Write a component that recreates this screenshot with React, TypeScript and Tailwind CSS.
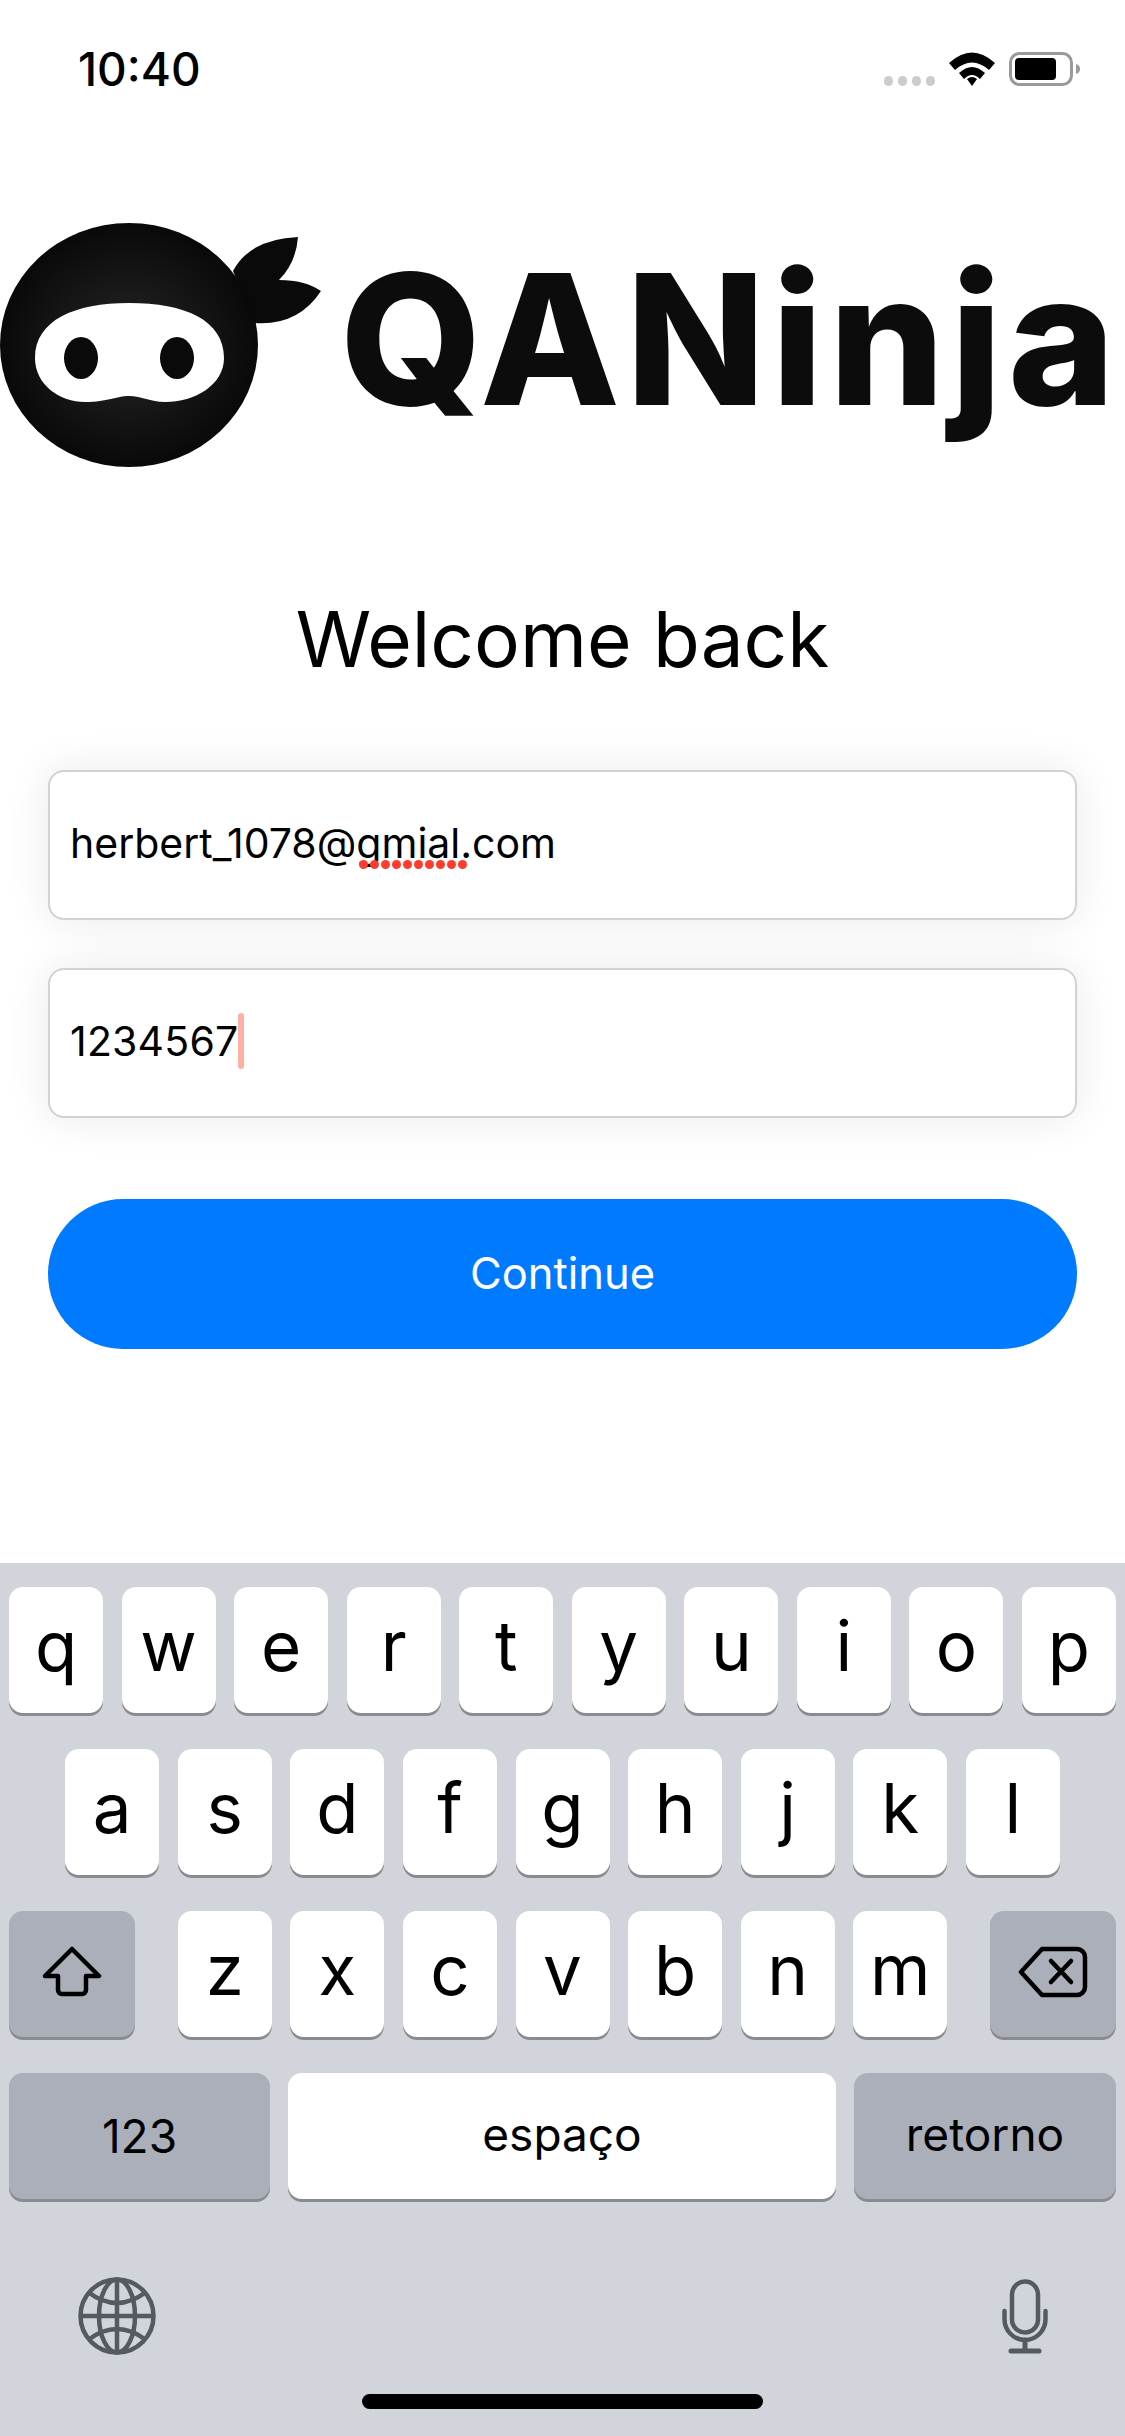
import React from "react";

const Key = ({ k }: { k: string }) => (
  <div className="w-[94px] h-[126px] bg-white rounded-[14px] shadow-[0_3px_0_#898b90] flex items-center justify-center text-[69px] leading-none text-black pb-[8px]">
    {k}
  </div>
);

const Head = () => (
  <svg width="322" height="246" viewBox="0 0 322 246" className="shrink-0">
    <defs>
      <radialGradient id="h" cx="50%" cy="50%" r="55%">
        <stop offset="0%" stopColor="#262626" />
        <stop offset="100%" stopColor="#060606" />
      </radialGradient>
    </defs>
    <path d="M233 48Q250 16 298 14Q296 40 279 57Q305 57 321 68Q298 103 255 100Z" fill="#0a0a0a" />
    <ellipse cx="129" cy="122" rx="129" ry="122" fill="url(#h)" />
    <path d="M35 135C35 97 75 80 129 80C185 80 224 97 224 135C224 162 195 179 165 179C150 179 142 173 129 173C116 173 108 179 85 179C60 179 35 162 35 135Z" fill="#fff" />
    <ellipse cx="81" cy="135" rx="17" ry="21" fill="#0a0a0a" />
    <ellipse cx="177" cy="135" rx="17" ry="21" fill="#0a0a0a" />
  </svg>
);

const Wifi = () => (
  <svg width="46" height="34" viewBox="0 0 46 34">
    <path d="M0 11Q23 -10 46 11L40 18Q23 3 6 18Z" fill="#000" />
    <path d="M10 21Q23 9 36 21L31 27Q23 19 15 27Z" fill="#000" />
    <path d="M18 27Q23 23 28 27L23 34Z" fill="#000" />
  </svg>
);

const Battery = () => (
  <svg width="72" height="34" viewBox="0 0 72 34">
    <rect x="1.5" y="1.5" width="61" height="31" rx="9" fill="none" stroke="#9a9a9a" strokeWidth="3" />
    <rect x="6" y="6" width="41" height="22" rx="4" fill="#000" />
    <path d="M67 12Q71 13 71 17Q71 21 67 22Z" fill="#9a9a9a" />
  </svg>
);

const Shift = () => (
  <svg width="60" height="52" viewBox="0 0 60 52" fill="none" stroke="#000" strokeWidth="4.5" strokeLinejoin="round">
    <path d="M30 3L57 30H44V44a4 4 0 0 1-4 4H20a4 4 0 0 1-4-4V30H3Z" />
  </svg>
);

const Del = () => (
  <svg width="70" height="52" viewBox="0 0 70 52" fill="none" stroke="#000" strokeWidth="4.5" strokeLinejoin="round" strokeLinecap="round">
    <path d="M24 3H59a8 8 0 0 1 8 8V41a8 8 0 0 1-8 8H24L3 26Z" />
    <path d="M33 15L53 36M53 15L33 36" />
  </svg>
);

const Globe = () => (
  <svg width="78" height="78" viewBox="0 0 78 78" fill="none" stroke="#555a62" strokeWidth="4.5">
    <circle cx="39" cy="39" r="36.5" />
    <ellipse cx="39" cy="39" rx="18" ry="36.5" />
    <path d="M39 2V76M2 39H76" />
    <path d="M10 15Q39 37 68 15M10 63Q39 41 68 63" />
  </svg>
);

const Mic = () => (
  <svg width="46" height="75" viewBox="0 0 46 75" fill="none" stroke="#555a62" strokeWidth="4.5" strokeLinecap="round">
    <rect x="10" y="2.5" width="26" height="51" rx="13" />
    <path d="M2.5 32V40C2.5 52 12 61 23 61C34 61 43.5 52 43.5 40V32" />
    <path d="M23 61V72M9 72H37" strokeWidth="5" />
  </svg>
);

export default function App() {
  return (
    <div className="w-[1125px] h-[2436px] bg-white flex flex-col overflow-hidden font-['Inter',sans-serif] text-black">
      <div className="h-[136px] flex items-start justify-between pt-[42px] pl-[78px] pr-[44px]">
        <span className="text-[46px] leading-[54px] font-[550]">10:40</span>
        <div className="flex items-start gap-[14px] pt-[10px]">
          <div className="flex gap-[5px] pt-[24px]">
            <span className="w-[9px] h-[10px] rounded-full bg-[#cccccc]" />
            <span className="w-[9px] h-[10px] rounded-full bg-[#cccccc]" />
            <span className="w-[9px] h-[10px] rounded-full bg-[#cccccc]" />
            <span className="w-[9px] h-[10px] rounded-full bg-[#cccccc]" />
          </div>
          <Wifi />
          <Battery />
        </div>
      </div>

      <div className="mt-[87px] h-[265px] flex items-start w-[1125px]">
        <Head />
        <div className="ml-[18px] mt-[25px] text-[182px] leading-[182px] font-extrabold tracking-[6px] text-[#0c0c0c] whitespace-nowrap">
          QANinja
        </div>
      </div>

      <h1 className="mt-[101px] text-center text-[76.5px] leading-[100px] font-normal">Welcome back</h1>

      <div className="mt-[81px] mx-[48px] h-[150px] rounded-[16px] border-2 border-[#d2d2d2] bg-white shadow-[0_0_44px_rgba(0,0,0,0.09)] flex items-center pl-[20px] text-[41px] leading-[48px] pb-[4px]">
        <span>
          herbert_1078@
          <span className="relative">
            gmial
            <span className="absolute left-[3px] bottom-[-1px] flex gap-[2px]">
              {Array.from({ length: 10 }).map((_, i) => (
                <span key={i} className="w-[9px] h-[9px] rounded-full bg-[#ff3b30]" />
              ))}
            </span>
          </span>
          .com
        </span>
      </div>

      <div className="mt-[48px] mx-[48px] h-[150px] rounded-[16px] border-2 border-[#d2d2d2] bg-white shadow-[0_0_44px_rgba(0,0,0,0.09)] flex items-center pl-[20px] text-[41px] leading-[48px] pb-[4px]">
        <span className="tracking-[0.2px]">1234567</span>
        <span className="w-[6px] h-[56px] rounded-[3px] bg-[#ffb0a2]" />
      </div>

      <div className="mt-[81px] mx-[48px] h-[150px] rounded-full bg-[#007aff] flex items-center justify-center text-white text-[43.5px]">
        Continue
      </div>

      <div className="mt-auto h-[873px] bg-[#d1d4da] pt-[24px] flex flex-col">
        <div className="flex justify-between px-[9px]">
          {"qwertyuiop".split("").map((k) => <Key key={k} k={k} />)}
        </div>
        <div className="flex justify-center gap-[18.6px] mt-[36px]">
          {"asdfghjkl".split("").map((k) => <Key key={k} k={k} />)}
        </div>
        <div className="flex justify-between px-[9px] mt-[36px]">
          <div className="w-[126px] h-[126px] rounded-[14px] bg-[#abafba] shadow-[0_3px_0_#898b90] flex items-center justify-center pb-[4px]">
            <Shift />
          </div>
          <div className="flex gap-[18.6px]">
            {"zxcvbnm".split("").map((k) => <Key key={k} k={k} />)}
          </div>
          <div className="w-[126px] h-[126px] rounded-[14px] bg-[#abafba] shadow-[0_3px_0_#898b90] flex items-center justify-center pb-[4px]">
            <Del />
          </div>
        </div>
        <div className="flex gap-[18px] px-[9px] mt-[36px] text-[46px]">
          <div className="w-[261px] h-[126px] rounded-[14px] bg-[#abafba] shadow-[0_3px_0_#898b90] flex items-center justify-center">123</div>
          <div className="flex-1 h-[126px] rounded-[14px] bg-white shadow-[0_3px_0_#898b90] flex items-center justify-center pb-[4px]">espaço</div>
          <div className="w-[262px] h-[126px] rounded-[14px] bg-[#abafba] shadow-[0_3px_0_#898b90] flex items-center justify-center pb-[4px]">retorno</div>
        </div>
        <div className="flex justify-between items-center pl-[78px] pr-[77px] mt-[78px]">
          <Globe />
          <Mic />
        </div>
        <div className="mt-[39px] mx-auto w-[401px] h-[15px] rounded-full bg-black" />
      </div>
    </div>
  );
}
